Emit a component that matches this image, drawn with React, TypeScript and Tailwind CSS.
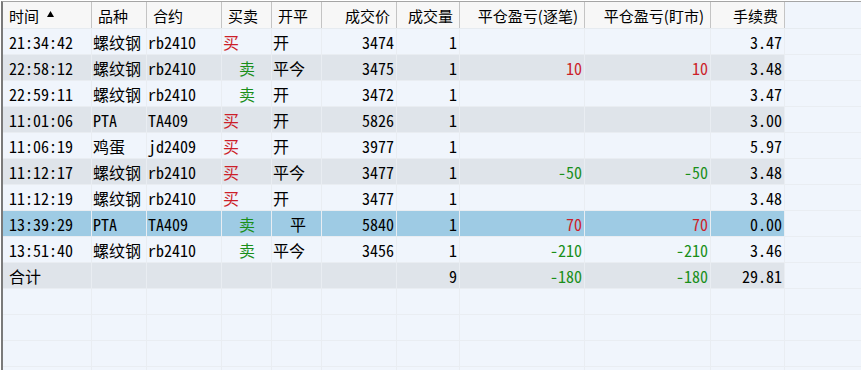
import React from "react";

type Align = "l" | "r";
type Cell = { t: string; c?: "red" | "green"; pad?: number };

const widths = [89, 55, 75, 50, 50, 75, 63, 125, 126, 74];
const aligns: Align[] = ["l", "l", "l", "l", "l", "r", "r", "r", "r", "r"];
const headers = ["时间", "品种", "合约", "买卖", "开平", "成交价", "成交量", "平仓盈亏(逐笔)", "平仓盈亏(盯市)", "手续费"];

const B = (v: "买" | "卖"): Cell => (v === "买" ? { t: "买", c: "red" } : { t: "卖", c: "green", pad: 17 });

const rows: Cell[][] = [
  [{ t: "21:34:42" }, { t: "螺纹钢" }, { t: "rb2410" }, B("买"), { t: "开" }, { t: "3474" }, { t: "1" }, { t: "" }, { t: "" }, { t: "3.47" }],
  [{ t: "22:58:12" }, { t: "螺纹钢" }, { t: "rb2410" }, B("卖"), { t: "平今" }, { t: "3475" }, { t: "1" }, { t: "10", c: "red" }, { t: "10", c: "red" }, { t: "3.48" }],
  [{ t: "22:59:11" }, { t: "螺纹钢" }, { t: "rb2410" }, B("卖"), { t: "开" }, { t: "3472" }, { t: "1" }, { t: "" }, { t: "" }, { t: "3.47" }],
  [{ t: "11:01:06" }, { t: "PTA" }, { t: "TA409" }, B("买"), { t: "开" }, { t: "5826" }, { t: "1" }, { t: "" }, { t: "" }, { t: "3.00" }],
  [{ t: "11:06:19" }, { t: "鸡蛋" }, { t: "jd2409" }, B("买"), { t: "开" }, { t: "3977" }, { t: "1" }, { t: "" }, { t: "" }, { t: "5.97" }],
  [{ t: "11:12:17" }, { t: "螺纹钢" }, { t: "rb2410" }, B("买"), { t: "平今" }, { t: "3477" }, { t: "1" }, { t: "-50", c: "green" }, { t: "-50", c: "green" }, { t: "3.48" }],
  [{ t: "11:12:19" }, { t: "螺纹钢" }, { t: "rb2410" }, B("买"), { t: "开" }, { t: "3477" }, { t: "1" }, { t: "" }, { t: "" }, { t: "3.48" }],
  [{ t: "13:39:29" }, { t: "PTA" }, { t: "TA409" }, B("卖"), { t: "平", pad: 18 }, { t: "5840" }, { t: "1" }, { t: "70", c: "red" }, { t: "70", c: "red" }, { t: "0.00" }],
  [{ t: "13:51:40" }, { t: "螺纹钢" }, { t: "rb2410" }, B("卖"), { t: "平今" }, { t: "3456" }, { t: "1" }, { t: "-210", c: "green" }, { t: "-210", c: "green" }, { t: "3.46" }],
  [{ t: "合计" }, { t: "" }, { t: "" }, { t: "" }, { t: "" }, { t: "" }, { t: "9" }, { t: "-180", c: "green" }, { t: "-180", c: "green" }, { t: "29.81" }],
];

const dataFont = {
  fontFamily: '"Noto Sans Mono CJK SC", "Noto Sans CJK SC", monospace',
};

function rowBg(i: number) {
  if (i === 7) return "bg-[#9ecbe4]";
  return i % 2 === 0 ? "bg-[#f0f5fc]" : "bg-[#dfe4ea]";
}

export default function App() {
  return (
    <div className="w-[861px] h-[370px] bg-white overflow-hidden pt-px pl-px">
      <div className="h-full border-t border-l-2 border-t-[#a5a5a5] border-l-[#7a7a7a] bg-[#f0f5fc] flex flex-col">
        {/* header */}
        <div className="flex h-[27px] shrink-0 border-b border-[#e6ebf0]" style={{ fontFamily: '"Noto Sans CJK SC", sans-serif' }}>
          {headers.map((h, i) => (
            <div
              key={i}
              className={`h-full flex items-center bg-[#f7f7f7] border-r border-[#c4c4c4] text-[15px] text-black leading-none ${
                aligns[i] === "r" ? "justify-end pr-[6px]" : "pl-[6px]"
              }`}
              style={{ width: widths[i] }}
            >
              <span>{h}</span>
              {i === 0 && (
                <svg width="7" height="6" viewBox="0 0 7 6" className="ml-[8px] mb-[2px]">
                  <polygon points="3.5,0 7,6 0,6" fill="#000" />
                </svg>
              )}
            </div>
          ))}
          <div className="flex-1" />
        </div>
        {/* data rows */}
        {rows.map((r, ri) => (
          <div key={ri} className="flex h-[26px] shrink-0" style={dataFont}>
            {r.map((c, ci) => (
              <div
                key={ci}
                className={`h-full flex items-center border-r border-b border-[#e9edf2] text-[16px] leading-none pt-px ${rowBg(ri)} ${
                  aligns[ci] === "r" ? "justify-end pr-[2px]" : ci === 0 ? "pl-[6px]" : "pl-[1px]"
                } ${c.c === "red" ? "text-[#cc1f2a]" : c.c === "green" ? "text-[#1a8f1a]" : "text-black"}`}
                style={{ width: widths[ci], paddingLeft: c.pad !== undefined ? c.pad : undefined }}
              >
                {c.t}
              </div>
            ))}
            <div className="flex-1 h-full border-b border-[#e9edf2]" />
          </div>
        ))}
        {[0, 1, 2, 3].map((k) => (
          <div key={k} className="flex h-[26px] shrink-0">
            {widths.map((w, ci) => (
              <div key={ci} className="h-full border-r border-b border-[#e9edf2]" style={{ width: w }} />
            ))}
            <div className="flex-1 h-full border-b border-[#e9edf2]" />
          </div>
        ))}
      </div>
    </div>
  );
}
